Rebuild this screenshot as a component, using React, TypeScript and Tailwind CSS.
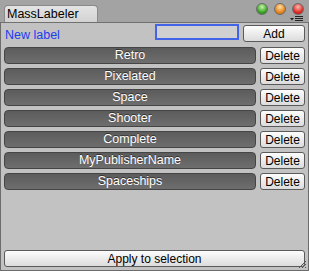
import React from "react";

const labels = ["Retro", "Pixelated", "Space", "Shooter", "Complete", "MyPublisherName", "Spaceships"];

function Light({ from, to }: { from: string; to: string }) {
  return (
    <div
      className="w-[12px] h-[12px] rounded-full border border-[#6a6a6a]"
      style={{ background: `radial-gradient(circle at 50% 30%, ${from} 0%, ${to} 70%)` }}
    />
  );
}

function Btn({ children, className = "" }: { children: React.ReactNode; className?: string }) {
  return (
    <div
      className={`flex items-center justify-center shrink-0 rounded-[3px] border border-[#5a5a5a] bg-gradient-to-b from-[#fdfdfd] to-[#dcdcdc] text-[12px] text-black leading-none ${className}`}
    >
      {children}
    </div>
  );
}

export default function App() {
  return (
    <div
      className="w-[309px] h-[271px] bg-[#a3a3a3] flex flex-col overflow-hidden"
      style={{ fontFamily: '"Liberation Sans", Arial, sans-serif' }}
    >
      <div className="h-[22px] flex items-end relative px-[4px]">
        <div className="h-[17px] w-[94px] rounded-t-[4px] bg-gradient-to-b from-[#e4e4e4] to-[#d2d2d2] border border-b-0 border-[#8a8a8a] flex items-center pl-[2px] text-[12.5px] text-black">
          MassLabeler
        </div>
        <div className="absolute right-[5px] top-[3px] flex gap-[6px]">
          <Light from="#c4f5a8" to="#2c9a18" />
          <Light from="#ffe0a0" to="#e07a10" />
          <Light from="#ffb8b0" to="#d81c14" />
        </div>
        <div className="absolute right-[6px] top-[16px] flex items-center">
          <svg width="13" height="6" viewBox="0 0 13 6">
            <path d="M0 2 L4 2 L2 4.5 Z" fill="#222" />
            <rect x="5" y="0" width="8" height="1" fill="#222" />
            <rect x="5" y="2" width="8" height="1" fill="#222" />
            <rect x="5" y="4" width="8" height="1" fill="#222" />
          </svg>
        </div>
      </div>
      <div className="flex-1 bg-[#c2c2c2] border-t border-[#707070] border-x border-x-[#6c6c6c] border-b border-b-[#6c6c6c] flex flex-col px-[3px] relative">
        <div className="flex items-start h-[19px] mt-[1px]">
          <div className="text-[12.5px] text-[#1d3df0] pl-[1px] flex-1 pt-[2px]">New label</div>
          <div className="w-[84px] h-[16px] bg-[#d0d0d0] border-2 border-[#4363e8] mr-[4px]" />
          <Btn className="w-[62px] h-[17px] mt-[1px] text-[12.5px]">Add</Btn>
        </div>
        <div className="flex flex-col gap-[4px] mt-[4px]">
          {labels.map((l) => (
            <div key={l} className="flex items-center gap-[4px] h-[17px]">
              <div
                className="flex-1 h-[17px] rounded-[4px] border border-[#454545] bg-gradient-to-b from-[#5c5c5c] to-[#6e6e6e] flex items-center justify-center text-[12.5px] text-white"
                style={{ textShadow: "0 -1px 0 #333" }}
              >
                {l}
              </div>
              <Btn className="w-[45px] h-[17px] text-[12.5px]">Delete</Btn>
            </div>
          ))}
        </div>
        <div className="flex-1" />
        <Btn className="h-[17px] mb-[3px] text-[12.5px]">Apply to selection</Btn>
        <svg className="absolute right-[1px] bottom-[1px]" width="9" height="9" viewBox="0 0 9 9">
          <path d="M8 1 L1 8 M8 4 L4 8 M8 7 L7 8" stroke="#555" strokeWidth="1" />
        </svg>
      </div>
    </div>
  );
}
